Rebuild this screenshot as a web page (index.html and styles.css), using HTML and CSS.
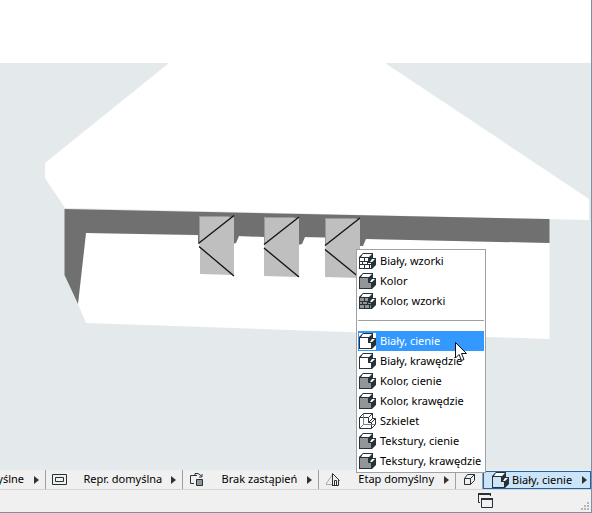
FILE: index.html
```html
<!DOCTYPE html>
<html lang="pl">
<head>
<meta charset="utf-8">
<title>Styl 3D</title>
<link rel="stylesheet" href="styles.css">
</head>
<body>
<svg class="defs" aria-hidden="true">
  <defs>
    <symbol id="block" viewBox="0 0 17 17">
      <path fill="#263238" d="M0 4L4 0H14V5H17V12L13 16H0Z"/>
      <path fill="#fff" d="M2 4L4 1H13L10 4ZM11 9L13 6H16L13 9Z"/>
      <path fill="currentColor" d="M1 5H9V10H12V15H1Z"/>
    </symbol>
    <symbol id="bricks" viewBox="0 0 17 17">
      <use href="#block"/>
      <path fill="none" stroke="#263238" d="M1 8.500H9M1 11.500H12M5.500 5V8M3.500 9V11M8.500 9V11M5.500 12V15M10.500 12V15"/>
    </symbol>
    <symbol id="wire" viewBox="0 0 17 17">
      <path fill="#fff" stroke="#263238" d="M.5 4.500L4.500 .5H13.500V5.500H16.500V11.500L12.500 15.500H.5Z"/>
      <path fill="none" stroke="#263238" d="M.5 4.500H9.500V9.500H12.500V15.500M9.500 4.500L13.500 .5M9.500 9.500L13.500 5.500M12.500 9.500L16.500 5.500"/>
      <path fill="none" stroke="#78828a" d="M4.500 1V11.500H16M.5 15.500L4.500 11.500"/>
    </symbol>
  </defs>
</svg>
<main class="window">
  <section class="viewport" aria-label="Widok 3D">
    <svg class="scene" viewBox="0 0 591 470" preserveAspectRatio="xMinYMin slice">
      <path fill="#fff" d="M0 0H591V63H0ZM169 63H385L589 199V220L65 208L45 178V163ZM86 233L549.500 243V339L86 323L78 304Z"/>
      <path fill="#707070" d="M64.500 209L549.500 219V243L366 239L363 246H356V238L305 237L302 244L298 245V237H264L239 236L236 243L233 244V235H200V244H198V235L86 233L78 304L64.500 275Z"/>
      <path fill="#bfbfbf" d="M199.500 216L234 217V275L200 274V247L198 245L199.500 243ZM264 217L299 218V277L264 276ZM325 218L360 219V278L325 277Z"/>
      <path fill="none" stroke="#999" d="M199.500 243V216.500H229M264.500 244V217.500H294M325.500 245V218.500H356"/>
      <path fill="#fff" d="M198 244L200 245L198 247ZM263 245L265 246L263 248ZM324 246L326 247L324 249Z"/>
      <path fill="none" stroke="#111" stroke-width="1.300" d="M199 243L234 215.500M199 246.500L234 276M264 244.500L299 217M264 248L299 277M325 245.500L360 218M325 249.500L360 278"/>
    </svg>
  </section>
  <nav class="options" aria-label="Szybkie opcje">
    <button class="option cut"><span class="label">Domyślne</span><i class="arrow"></i></button>
    <button class="option"><svg class="icon" viewBox="0 0 17 17"><path fill="none" stroke="#263238" d="M.5 3.500H14.500V13.500H.5ZM3.500 6.500H11.500V10.500H3.500Z"/></svg><span class="label">Repr. domyślna</span><i class="arrow"></i></button>
    <button class="option"><svg class="icon" viewBox="0 0 17 17"><path fill="#929699" stroke="#263238" d="M7.500 8.500H13.500V14.500H7.500Z"/><path fill="none" stroke="#263238" d="M8 4.500H1.500V12.500H5M6 4.500V2.500H9L12.500 5M10 6H13V3"/></svg><span class="label">Brak zastąpień</span><i class="arrow"></i></button>
    <button class="option"><svg class="icon" viewBox="0 0 17 17"><path fill="none" stroke="#a5a8aa" d="M1 13L7.500 3.500M1 13.500H7"/><path fill="none" stroke="#263238" d="M7.500 14.500V2.500L14.500 9.500M7 14.500H13.500V8.500M9.500 14V9.500H11.500V14"/></svg><span class="label">Etap domyślny</span><i class="arrow"></i></button>
    <button class="option small" aria-label="Widok aksonometryczny"><svg class="icon" viewBox="0 0 17 17"><path fill="none" stroke="#263238" d="M3.500 7.500H9.500V13.500H3.500ZM3.500 7.500L6.500 3.500H13.500V9.500L9.500 13.500M9.500 7.500L13.500 3.500"/></svg></button>
    <button class="option current" aria-haspopup="menu" aria-expanded="true"><svg class="icon pale"><use href="#block"/></svg><span class="label">Biały, cienie</span><i class="arrow"></i></button>
  </nav>
  <footer class="footer">
    <button class="windows" aria-label="Okna"><svg viewBox="0 0 16 16"><path fill="none" stroke="#263238" d="M.5 0V9.500H2M12.500 0V3M3.500 5.500H14.500V14.500H3.500Z"/><path fill="#263238" d="M0 0H13V2H0ZM3 5H15V7H3Z"/></svg></button>
    <svg class="grip" viewBox="0 0 8 8"><path fill="#b5b5b5" d="M6 0H8V2H6ZM3 3H5V5H3ZM6 3H8V5H6ZM0 6H2V8H0ZM3 6H5V8H3ZM6 6H8V8H6Z"/></svg>
  </footer>
  <div class="menu" role="menu">
    <button class="item" role="menuitem"><svg class="icon pale"><use href="#bricks"/></svg>Biały, wzorki</button>
    <button class="item" role="menuitem"><svg class="icon"><use href="#block"/></svg>Kolor</button>
    <button class="item" role="menuitem"><svg class="icon"><use href="#bricks"/></svg>Kolor, wzorki</button>
    <hr class="divider">
    <button class="item active" role="menuitem"><svg class="icon pale"><use href="#block"/></svg>Biały, cienie</button>
    <button class="item" role="menuitem"><svg class="icon pale"><use href="#block"/></svg>Biały, krawędzie</button>
    <button class="item" role="menuitem"><svg class="icon"><use href="#block"/></svg>Kolor, cienie</button>
    <button class="item" role="menuitem"><svg class="icon"><use href="#block"/></svg>Kolor, krawędzie</button>
    <button class="item" role="menuitem"><svg class="icon"><use href="#wire"/></svg>Szkielet</button>
    <button class="item" role="menuitem"><svg class="icon"><use href="#block"/></svg>Tekstury, cienie</button>
    <button class="item" role="menuitem"><svg class="icon"><use href="#block"/></svg>Tekstury, krawędzie</button>
    <svg class="pointer" viewBox="0 0 13 20"><path fill="#fff" stroke="#111" d="M.5 .5V16L4 12.500L6.500 18.500L9 17.500L6.500 11.500H11.500Z"/></svg>
  </div>
</main>
</body>
</html>
```
FILE: styles.css
```css
* { box-sizing: border-box; }

body {
  margin: 0;
  font: 11px/16px "Noto Sans", "Open Sans", sans-serif;
  color: #000;
}

button {
  border: 0;
  padding: 0;
  background: none;
  font: inherit;
  color: inherit;
  text-align: left;
}

.defs { position: absolute; width: 0; height: 0; }

.window {
  position: relative;
  display: flex;
  flex-direction: column;
  height: 100vh;
  overflow: hidden;
  border-right: 1px solid #7891a5;
  border-bottom: 1px solid #7891a5;
  background: #f0f0f0;
}

.viewport {
  flex: 1;
  min-height: 0;
  background: #e4eaec;
}

.scene { display: block; width: 100%; height: 100%; }

.options {
  display: grid;
  grid-template-columns: 46px 1fr 1fr 1fr 27px 108px;
  height: 20px;
  border-bottom: 1px solid #d4d4d4;
}

.option {
  display: flex;
  align-items: center;
  min-width: 0;
  padding: 0 6px;
  border-right: 1px solid #a0a0a0;
  white-space: nowrap;
}

.label {
  flex: 1;
  padding: 0 0 1px 6px;
  text-align: center;
}

.cut { justify-content: flex-end; overflow: hidden; }
.cut .label { flex: none; margin-right: 10px; }
.small { justify-content: center; }

.current {
  height: 18px;
  margin-top: 1px;
  padding: 0 3px 0 8px;
  border: 1px solid #1a65a8;
  background: #cce4f7;
}

.current .label { padding-left: 3px; text-align: left; }

.icon {
  flex: none;
  width: 17px;
  height: 17px;
  color: #929699;
}

.pale { color: #fff; }
.current .icon { margin-bottom: -1px; color: #cce4f7; }

.arrow {
  flex: none;
  border: 4px solid transparent;
  border-left: 5px solid #333;
  border-right: 0;
}

.footer {
  display: flex;
  justify-content: flex-end;
  align-items: flex-end;
  gap: 87px;
  height: 22px;
  padding: 0 2px 2px 0;
}

.windows { width: 16px; height: 16px; margin-bottom: 1px; }
.windows svg { display: block; width: 16px; height: 16px; }
.grip { width: 8px; height: 8px; }

.menu {
  position: absolute;
  right: 105px;
  bottom: 39px;
  width: 130px;
  padding: 1px;
  border: 1px solid #a0a0a6;
  background: #fff;
}

.item {
  display: flex;
  align-items: center;
  gap: 4px;
  width: 100%;
  height: 20px;
  padding-left: 1px;
  white-space: nowrap;
}

.item .icon { margin-top: 1px; }
.active { background: #3399ff; color: #fff; }
.active .icon { background: #fff; }

.divider {
  height: 1px;
  margin: 9px 0 10px;
  border: 0;
  background: #a0a0a0;
}

.pointer {
  position: absolute;
  top: 92px;
  left: 98px;
  width: 13px;
  height: 20px;
}
```
